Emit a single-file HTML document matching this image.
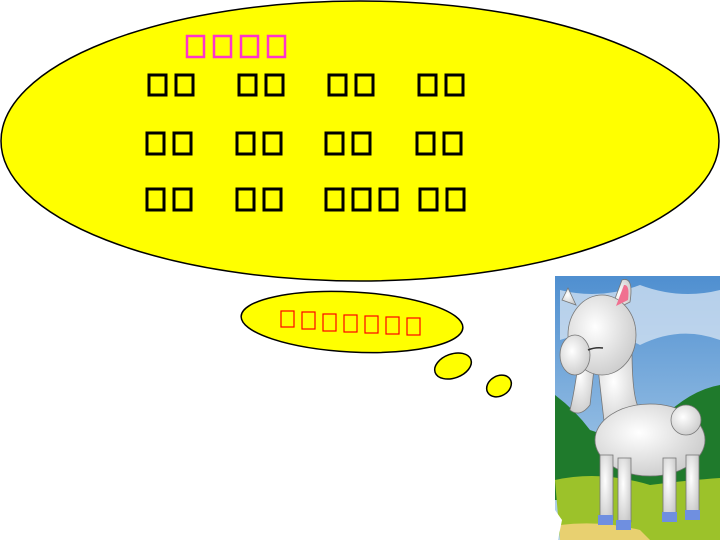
<!DOCTYPE html>
<html><head><meta charset="utf-8"><style>
html,body{margin:0;padding:0;background:#fff;width:720px;height:540px;overflow:hidden}
</style></head><body>
<svg width="720" height="540" viewBox="0 0 720 540" xmlns="http://www.w3.org/2000/svg">
<ellipse cx="360" cy="141" rx="359" ry="140" fill="#ffff00" stroke="#000" stroke-width="1.5"/>
<g fill="none" stroke="#ff33cc" stroke-width="2.5">
<rect x="187" y="36" width="17" height="21"/><rect x="214" y="36" width="17" height="21"/><rect x="241" y="36" width="17" height="21"/><rect x="268" y="36" width="17" height="21"/>
</g>
<g fill="none" stroke="#000" stroke-width="3">
<rect x="149" y="75" width="17" height="20"/><rect x="176" y="75" width="17" height="20"/>
<rect x="239" y="75" width="17" height="20"/><rect x="266" y="75" width="17" height="20"/>
<rect x="329" y="75" width="17" height="20"/><rect x="356" y="75" width="17" height="20"/>
<rect x="419" y="75" width="17" height="20"/><rect x="446" y="75" width="17" height="20"/>
<rect x="147" y="133" width="17" height="21"/><rect x="174" y="133" width="17" height="21"/>
<rect x="237" y="133" width="17" height="21"/><rect x="264" y="133" width="17" height="21"/>
<rect x="326" y="133" width="17" height="21"/><rect x="353" y="133" width="17" height="21"/>
<rect x="417" y="133" width="17" height="21"/><rect x="444" y="133" width="17" height="21"/>
<rect x="147" y="189" width="17" height="21"/><rect x="174" y="189" width="17" height="21"/>
<rect x="237" y="189" width="17" height="21"/><rect x="264" y="189" width="17" height="21"/>
<rect x="326" y="189" width="17" height="21"/><rect x="353" y="189" width="17" height="21"/><rect x="380" y="189" width="17" height="21"/>
<rect x="420" y="189" width="17" height="21"/><rect x="447" y="189" width="17" height="21"/>
</g>
<ellipse cx="352" cy="322" rx="111" ry="30" fill="#ffff00" stroke="#000" stroke-width="1.5" transform="rotate(3 352 322)"/>
<g fill="none" stroke="#ff0000" stroke-width="1.2">
<rect x="281" y="311" width="13" height="16"/><rect x="302" y="312" width="13" height="17"/><rect x="323" y="314" width="13" height="17"/><rect x="344" y="315" width="13" height="17"/><rect x="365" y="316" width="13" height="17"/><rect x="386" y="317" width="13" height="17"/><rect x="407" y="318" width="13" height="17"/>
</g>
<ellipse cx="453" cy="366" rx="19" ry="12" fill="#ffff00" stroke="#000" stroke-width="1.5" transform="rotate(-20 453 366)"/>
<ellipse cx="499" cy="386" rx="13" ry="10" fill="#ffff00" stroke="#000" stroke-width="1.5" transform="rotate(-30 499 386)"/>
<defs>
<linearGradient id="sky" x1="0" y1="0" x2="0" y2="1"><stop offset="0" stop-color="#4f8fd0"/><stop offset="1" stop-color="#bcd8ee"/></linearGradient>
<radialGradient id="wh" cx="0.4" cy="0.4" r="0.7"><stop offset="0" stop-color="#ffffff"/><stop offset="1" stop-color="#c8c8c8"/></radialGradient>
</defs>
<rect x="555" y="276" width="165" height="264" fill="url(#sky)"/>
<path d="M560 290 Q600 300 640 285 Q680 300 720 290 L720 340 Q680 325 640 345 Q600 325 560 340Z" fill="#dfeaf5" opacity="0.7"/>
<path d="M555 395 Q575 410 590 430 L620 440 L660 420 Q690 390 720 385 L720 500 L555 500Z" fill="#1f7a2c"/>
<path d="M555 480 Q600 470 650 485 Q690 480 720 478 L720 540 L560 540Z" fill="#9cc22a"/>
<path d="M560 525 Q600 520 640 530 L650 540 L560 540Z" fill="#e8d070"/>
<path d="M555 510 L562 520 L558 540 L555 540Z" fill="#fff"/>
<g fill="url(#wh)" stroke="#777" stroke-width="0.8">
<path d="M562 300 L568 288 L576 305Z"/>
<path d="M610 312 L622 280 Q634 276 630 302Z"/>
<path d="M580 350 Q575 390 570 410 Q580 418 590 405 L595 360Z"/>
<path d="M596 350 L632 350 Q632 400 640 410 L605 430Z"/>
<ellipse cx="602" cy="335" rx="34" ry="40"/>
<ellipse cx="575" cy="355" rx="15" ry="20"/>
<ellipse cx="650" cy="440" rx="55" ry="36"/>
<ellipse cx="686" cy="420" rx="15" ry="15"/>
<rect x="600" y="455" width="13" height="65"/><rect x="618" y="458" width="13" height="64"/>
<rect x="663" y="458" width="13" height="58"/><rect x="686" y="455" width="13" height="58"/>
</g>
<path d="M616 306 L624 285 Q630 284 628 300Z" fill="#f07090"/>
<path d="M588 350 Q595 347 603 348" stroke="#333" fill="none" stroke-width="1.5"/>
<g fill="#6f8fe0"><rect x="598" y="515" width="15" height="10"/><rect x="616" y="520" width="15" height="10"/><rect x="662" y="512" width="15" height="10"/><rect x="685" y="510" width="15" height="10"/></g>
</svg>
</body></html>
